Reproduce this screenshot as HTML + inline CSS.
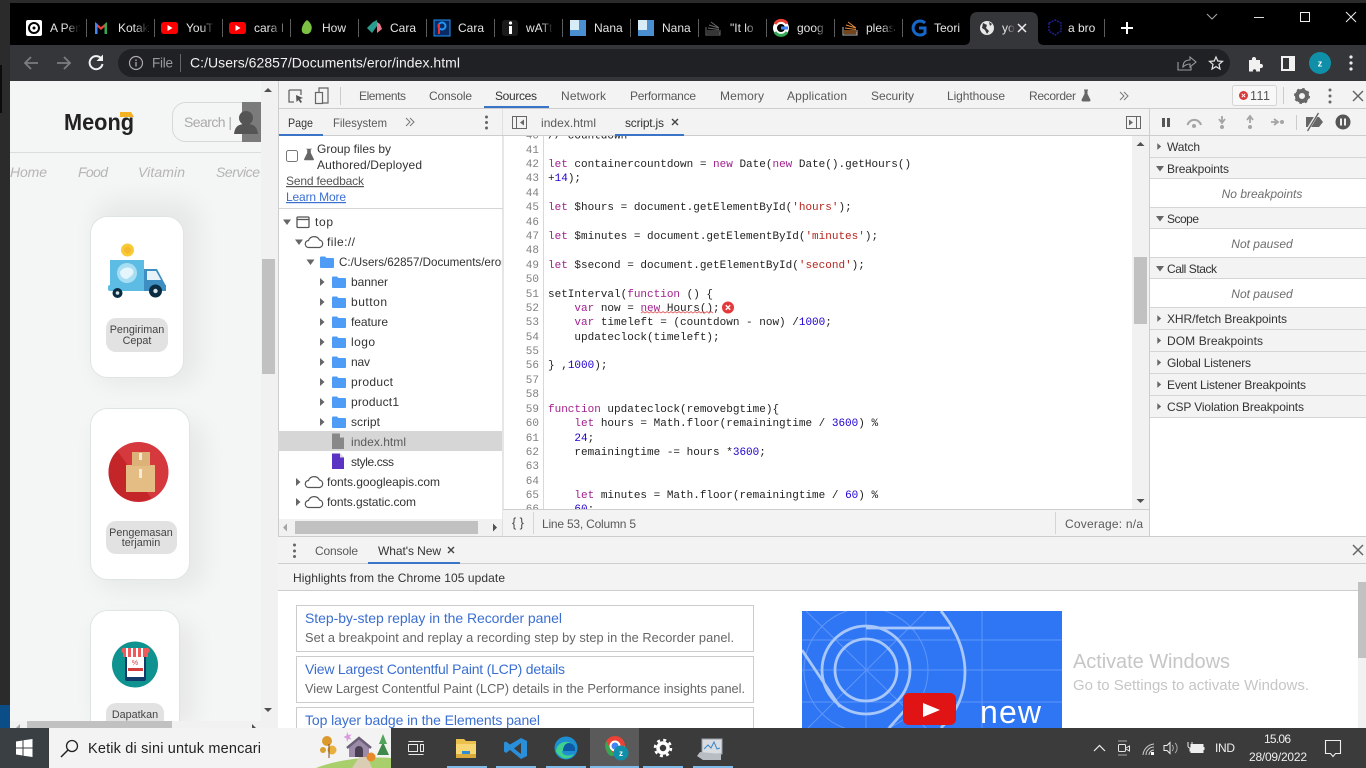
<!DOCTYPE html>
<html lang="en">
<head>
<meta charset="utf-8">
<title>script.js - DevTools</title>
<style>
html,body{margin:0;padding:0;width:1366px;height:768px;overflow:hidden;background:#000}
svg{display:block}
text{font-family:"Liberation Sans",sans-serif;font-size:12px;fill:#333;white-space:pre}
.t{fill:#e4e4e4;font-size:12px}
.d{fill:#5a5a5a}
.w{fill:#333}
.n{fill:#808080;font-family:"Liberation Mono",monospace;font-size:11px;text-anchor:end}
.c{fill:#222;font-family:"Liberation Mono",monospace;font-size:11px}
.k{fill:#a1218e}.u{fill:#1c00cf}.s{fill:#b3261e}
.i{fill:#6d6d6d;font-style:italic;text-anchor:middle}
.nav{fill:#b5b5b5;font-style:italic;font-size:14px}
.lab{fill:#444;font-size:10.8px;text-anchor:middle}
.l{fill:#3a6fd0;font-size:14px}
.g{fill:#666;font-size:12.8px}
</style>
</head>
<body>
<svg width="1366" height="768" viewBox="0 0 1366 768" xmlns="http://www.w3.org/2000/svg">
<defs>
<linearGradient id="f"><stop offset="0" stop-color="#000" stop-opacity="0"/><stop offset="1" stop-color="#000"/></linearGradient>
<linearGradient id="f2"><stop offset="0" stop-color="#35363a" stop-opacity="0"/><stop offset="1" stop-color="#35363a"/></linearGradient>
<filter id="sh" x="-40%" y="-20%" width="180%" height="140%"><feGaussianBlur stdDeviation="12"/></filter>
<clipPath id="pg"><rect x="10" y="81" width="251" height="640"/></clipPath>
<clipPath id="th"><rect x="802" y="611" width="260" height="117"/></clipPath>
<clipPath id="nv"><rect x="279" y="210" width="223" height="310"/></clipPath>
<path id="fo" d="M0 1.500a1 1 0 0 1 1-1h4l1.500 1.500H13a1 1 0 0 1 1 1V11a1 1 0 0 1-1 1H1a1 1 0 0 1-1-1z" fill="#4e9cf5"/>
<path id="ra" d="M0-4L4.500 0L0 4z" fill="#666"/>
<path id="rd" d="M-4-2.500H4L0 3z" fill="#666"/>
<path id="cl" d="M4 11.500a3.500 3.500 0 0 1-.5-7A6 6 0 0 1 14.500 4a3.800 3.800 0 0 1 0 7.500z" fill="none" stroke="#555" stroke-width="1.200"/>
</defs>

<!-- window frame -->
<rect width="1366" height="768" fill="#000"/>
<rect width="1366" height="3" fill="#2b2b2b"/>
<rect width="10" height="728" fill="#2b2b2b"/>
<rect x="0" y="65" width="2" height="48" fill="#0c0c0c"/>
<rect x="0" y="705" width="10" height="23" fill="#0b4d87"/>

<!-- tab strip -->
<path d="M964 45q6 0 6-6V20q0-8 8-8h52q8 0 8 8v19q0 6 6 6z" fill="#35363a"/>
<path d="M86.500 19V37M154.500 19V37M222.500 19V37M290.500 19V37M358.500 19V37M426.500 19V37M494.500 19V37M562.500 19V37M630.500 19V37M698.500 19V37M766.500 19V37M834.500 19V37M902.500 19V37M1104.500 19V37" stroke="#5c5c5c"/>
<!-- favicons -->
<rect x="26" y="20" width="16" height="16" rx="2" fill="#fff"/><circle cx="34" cy="28" r="5" fill="none" stroke="#000" stroke-width="2"/><circle cx="34" cy="28" r="1.500" fill="#000"/>
<path d="M95 34V22l6 5 6-5v12h-2.500v-7l-3.500 3-3.500-3v7z" fill="#ea4335"/><path d="M95 34V22l2.500 2v10z" fill="#4285f4"/><path d="M107 34V22l-2.500 2v10z" fill="#34a853"/>
<rect x="161" y="22" width="17" height="12" rx="3" fill="#f00"/><path d="M167.500 25v6l5-3z" fill="#fff"/>
<rect x="229" y="22" width="17" height="12" rx="3" fill="#f00"/><path d="M235.500 25v6l5-3z" fill="#fff"/>
<path d="M307 20c4 3 6 7 4 11-1 3-5 4-8 2-3-3 0-10 4-13z" fill="#7cc142"/>
<path d="M373 22l4-2v6l-5 7-5-5z" fill="#2a9d8f"/><path d="M377 22l3 2 2 5-5 4v-7z" fill="#e8788a"/>
<rect x="434" y="20" width="16" height="16" fill="#0a2a66" stroke="#2196f3"/><circle cx="442" cy="26" r="3.500" fill="none" stroke="#2196f3" stroke-width="2"/><rect x="438" y="24" width="2" height="10" fill="#e33"/>
<rect x="502" y="20" width="16" height="16" rx="3" fill="#1a1a1a"/><rect x="509" y="26" width="3" height="8" fill="#fff"/><circle cx="510.500" cy="23" r="1.600" fill="#fff"/>
<rect x="570" y="20" width="16" height="16" fill="#4a90d0"/><rect x="570" y="20" width="9" height="10" fill="#d8ecf8"/>
<rect x="638" y="20" width="16" height="16" fill="#4a90d0"/><rect x="638" y="20" width="9" height="10" fill="#d8ecf8"/>
<path d="M707 33h13M707 31h12M708 28l11 1.500M709 25l10 3M711 22l8 6" stroke="#6b6b6b" stroke-width="1" fill="none"/><path d="M706 27v8h14v-5" stroke="#6b6b6b" fill="none"/>
<circle cx="781" cy="28" r="6" fill="none" stroke="#fff" stroke-width="4"/><path d="M775 24a7 7 0 0 1 12-0.500" stroke="#ea4335" stroke-width="3" fill="none"/><path d="M775 32a7 7 0 0 0 12 0" stroke="#34a853" stroke-width="3" fill="none"/><path d="M781 28h7" stroke="#4285f4" stroke-width="3"/>
<path d="M844 33h13M844 31h12M845 28l11 1.500M846 25l10 3M848 22l8 6" stroke="#e88a3a" stroke-width="1" fill="none"/><path d="M843 27v8h14v-5" stroke="#bbb" fill="none"/>
<path d="M925 23a7 7 0 1 0 0 10v-5h-6" stroke="#1767c8" stroke-width="3" fill="none"/>
<circle cx="987" cy="28" r="7" fill="#e8e8e8"/><path d="M983 23l4 2-1 3 3 3-2 3-2-4-3-2zM989 22l3 2-2 2z" fill="#35363a"/>
<path d="M1049 23l6-3 6 3v8l-6 4-6-4z" fill="none" stroke="#20208c" stroke-width="1.500" stroke-dasharray="2 1"/>
<!-- titles -->
<text class="t" x="50" y="32">A Per</text><rect x="66" y="18" width="13" height="20" fill="url(#f)"/>
<text class="t" x="118" y="32">Kotak</text><rect x="135" y="18" width="13" height="20" fill="url(#f)"/>
<text class="t" x="186" y="32">YouT</text><rect x="202" y="18" width="12" height="20" fill="url(#f)"/>
<text class="t" x="254" y="32">cara l</text><rect x="270" y="18" width="12" height="20" fill="url(#f)"/>
<text class="t" x="322" y="32">How</text>
<text class="t" x="390" y="32">Cara</text>
<text class="t" x="458" y="32">Cara</text>
<text class="t" x="526" y="32">wATt</text><rect x="541" y="18" width="12" height="20" fill="url(#f)"/>
<text class="t" x="594" y="32">Nana</text>
<text class="t" x="662" y="32">Nana</text>
<text class="t" x="730" y="32">"It lo</text><rect x="746" y="18" width="12" height="20" fill="url(#f)"/>
<text class="t" x="797" y="32">goog</text><rect x="815" y="18" width="12" height="20" fill="url(#f)"/>
<text class="t" x="866" y="32">pleas</text><rect x="882" y="18" width="12" height="20" fill="url(#f)"/>
<text class="t" x="934" y="32">Teori</text>
<text class="t" x="1002" y="32">yo</text><rect x="1007" y="18" width="8" height="20" fill="url(#f2)"/>
<text class="t" x="1068" y="32">a bro</text>
<path d="M1018 24l8 8M1026 24l-8 8" stroke="#eee" stroke-width="1.500"/>
<path d="M1127 22v12M1121 28h12" stroke="#fff" stroke-width="2"/>
<!-- window controls -->
<path d="M1207 14l5 5 5-5" fill="none" stroke="#aaa"/>
<path d="M1254 17.500h10" stroke="#ddd"/>
<rect x="1300.500" y="12.500" width="9" height="9" fill="none" stroke="#eee"/>
<path d="M1346 12l10 10M1356 12l-10 10" stroke="#eee"/>

<!-- toolbar -->
<rect x="10" y="45" width="1356" height="36" fill="#35363a"/>
<rect x="118" y="49" width="1112" height="28" rx="14" fill="#202124"/>
<path d="M38 63H25M31 57l-6 6 6 6" fill="none" stroke="#7b7d80" stroke-width="1.800"/>
<path d="M57 63h13M64 57l6 6-6 6" fill="none" stroke="#7b7d80" stroke-width="1.800"/>
<path d="M101.500 59a6.500 6.500 0 1 0 1 5" fill="none" stroke="#f1f1f1" stroke-width="2"/><path d="M103 54.500v6.500h-6.500z" fill="#f1f1f1"/>
<circle cx="136" cy="63" r="6.500" fill="none" stroke="#aaa" stroke-width="1.200"/><path d="M136 62v4.500M136 59.500v1.500" stroke="#aaa" stroke-width="1.300"/>
<text x="152" y="67.500" textLength="21" style="font-size:13.500px;fill:#9a9b9d">File</text>
<path d="M180.500 54v18" stroke="#666"/>
<text x="190" y="67.500" textLength="270" style="font-size:14px;fill:#f1f1f1">C:/Users/62857/Documents/eror/index.html</text>
<path d="M1178 62v8h13v-3M1183 67c0-5 3-7 7-7v-3l6 5-6 5v-3c-3 0-5 1-7 3z" fill="none" stroke="#9a9b9d" stroke-width="1.100"/>
<path d="M1216 57l1.800 4 4.700.4-3.500 3 1 4.600-4-2.400-4 2.400 1-4.600-3.500-3 4.700-.4z" fill="none" stroke="#e4e4e4" stroke-width="1.200"/>
<path d="M1249 60h3c-1-4 5-4 4 0h4v4c4-1 4 5 0 4v3.500h-4c1-3-4-3-3 0h-4z" fill="#f1f1f1"/>
<rect x="1282" y="57" width="12" height="13" fill="none" stroke="#f1f1f1" stroke-width="2"/><rect x="1289" y="57" width="5" height="13" fill="#f1f1f1"/>
<circle cx="1320" cy="63" r="11" fill="#0f8fa8"/><text x="1320" y="66.500" style="font-size:9px;font-weight:bold;fill:#fff;text-anchor:middle">z</text>
<circle cx="1351" cy="57" r="1.600" fill="#eee"/><circle cx="1351" cy="63" r="1.600" fill="#eee"/><circle cx="1351" cy="69" r="1.600" fill="#eee"/>

<!-- page -->
<rect x="10" y="81" width="268" height="647" fill="#f4f5f5"/>
<g clip-path="url(#pg)">
<text x="64" y="130" textLength="70" lengthAdjust="spacingAndGlyphs" style="font-size:23.500px;font-weight:bold;fill:#222">Meong</text>
<path d="M120 112h11l3 5h-14z" fill="#f4b223"/>
<rect x="172.500" y="102.500" width="100" height="39" rx="13" fill="#f4f5f5" stroke="#d8d8d8"/>
<text x="184" y="127" textLength="48" style="font-size:14px;fill:#aaa">Search |</text>
<rect x="242" y="102" width="19" height="40" fill="#7b7b7b"/>
<circle cx="246" cy="118" r="7" fill="#555"/><path d="M234 134c1-9 6-10 12-10s11 1 12 10z" fill="#555"/>
<rect x="10" y="152" width="251" height="1" fill="#dcdcdc"/>
<text class="nav" x="10" y="177" textLength="37">Home</text>
<text class="nav" x="78" y="177" textLength="30">Food</text>
<text class="nav" x="138" y="177" textLength="47">Vitamin</text>
<text class="nav" x="216" y="177" textLength="44">Service</text>
<rect x="95" y="200" width="105" height="185" rx="20" fill="#000" opacity=".05" filter="url(#sh)"/>
<rect x="95" y="420" width="110" height="170" rx="20" fill="#000" opacity=".05" filter="url(#sh)"/>
<rect x="95" y="620" width="100" height="110" rx="20" fill="#000" opacity=".05" filter="url(#sh)"/>
<!-- card 1 -->
<rect x="90.500" y="216.500" width="93" height="161" rx="17" fill="#fff" stroke="#dfe6e2"/>
<circle cx="127.500" cy="250" r="6.500" fill="#f8cb36"/><circle cx="127.500" cy="250" r="3.500" fill="#f5b92c"/>
<rect x="110" y="260" width="34" height="31" fill="#5dbce4"/>
<circle cx="127" cy="273" r="10" fill="#a8def3"/><path d="M120 272c3-5 10-6 13-2 2 4-3 7-6 9-4 0-7-3-7-7z" fill="#e4f5fc"/>
<path d="M144 269h13l9 17v5h-22z" fill="#3e8ec2"/><path d="M147 271h9l5 9h-14z" fill="#e7f2f8"/>
<rect x="108" y="285" width="58" height="6" rx="2" fill="#5dbce4"/><path d="M144 285h22v6h-22z" fill="#3e8ec2"/>
<circle cx="117.500" cy="293" r="5" fill="#0a2c42"/><circle cx="117.500" cy="293" r="1.800" fill="#d8e4ea"/>
<circle cx="155.500" cy="291" r="6.500" fill="#0a2c42"/><circle cx="155.500" cy="291" r="2.200" fill="#d8e4ea"/>
<rect x="106" y="318" width="62" height="34" rx="10" fill="#e2e2e2"/>
<text class="lab" x="137" y="333">Pengiriman</text><text class="lab" x="137" y="344">Cepat</text>
<!-- card 2 -->
<rect x="90.500" y="408.500" width="99" height="171" rx="17" fill="#fff" stroke="#dfe6e2"/>
<circle cx="138.500" cy="472" r="30" fill="#d5383d"/>
<path d="M117.300 493.200a30 30 0 0 1 0-42.400l34 47.500a30 30 0 0 1-34-5.100z" fill="#c42529"/>
<rect x="126" y="465" width="29" height="27" fill="#e3bd83"/><rect x="132" y="452" width="18" height="14" fill="#dcb279"/>
<rect x="139" y="453" width="3" height="7" fill="#f3ead8"/><rect x="139" y="469" width="3" height="9" fill="#f3ead8"/>
<rect x="106" y="521" width="71" height="33" rx="10" fill="#e2e2e2"/>
<text class="lab" x="141" y="536">Pengemasan</text><text class="lab" x="141" y="546">terjamin</text>
<!-- card 3 -->
<rect x="90.500" y="610.500" width="89" height="140" rx="17" fill="#fff" stroke="#dfe6e2"/>
<circle cx="135" cy="664.500" r="23" fill="#0f9390"/>
<rect x="125" y="650" width="21" height="31" rx="2" fill="#133a68"/><rect x="127" y="657" width="17" height="20" fill="#fff"/>
<path d="M123 653a2 2 0 0 1 2-5h21a2 2 0 0 1 2 5v4h-25z" fill="#f05a5a"/>
<path d="M127 648v9M132 648v9M137 648v9M142 648v9" stroke="#fff" stroke-width="2"/>
<rect x="128" y="668" width="15" height="3" fill="#d63c3c"/><text x="135" y="665" style="font-size:7px;fill:#d63c3c;text-anchor:middle">%</text>
<rect x="106" y="703" width="58" height="30" rx="10" fill="#e2e2e2"/>
<text class="lab" x="135" y="718">Dapatkan</text>
</g>
<!-- page scrollbars -->
<rect x="261" y="81" width="17" height="647" fill="#f1f1f1"/>
<rect x="262" y="259" width="13" height="115" fill="#c1c1c1"/>
<path d="M268 88l4 4h-8zM268 712l4-4h-8z" fill="#505050"/>
<rect x="10" y="721" width="251" height="7" fill="#f1f1f1"/>
<rect x="27" y="721" width="145" height="7" fill="#c1c1c1"/>
<path d="M252 724l4 4h-4z" fill="#505050"/><path d="M20 724l-4 4h4z" fill="#a5a5a5"/>

<!-- devtools top tabs -->
<rect x="278" width="1088" y="81" height="647" fill="#fff"/>
<rect x="278" y="81" width="1088" height="27" fill="#f3f3f3"/>
<rect x="278" y="108" width="1088" height="1" fill="#cdcdcd"/>
<rect x="278" y="81" width="1" height="455" fill="#cdcdcd"/>
<path d="M289 90h12v5M289 90v12h5" fill="none" stroke="#666" stroke-width="1.300"/><path d="M296 95l7 3-3 1 2 3-1.500 1-2-3-2 2z" fill="#555"/>
<rect x="315.500" y="92.500" width="7" height="11" fill="none" stroke="#666" stroke-width="1.200"/><path d="M319 92v-4h9v15h-5" fill="none" stroke="#666" stroke-width="1.200"/>
<path d="M340.500 87v18" stroke="#ccc"/>
<text class="d" x="359" y="100" textLength="47">Elements</text>
<text class="d" x="429" y="100" textLength="43">Console</text>
<text x="495" y="100" textLength="42">Sources</text>
<text class="d" x="561" y="100" textLength="45">Network</text>
<text class="d" x="630" y="100" textLength="66">Performance</text>
<text class="d" x="720" y="100" textLength="44">Memory</text>
<text class="d" x="787" y="100" textLength="60">Application</text>
<text class="d" x="871" y="100" textLength="43">Security</text>
<text class="d" x="947" y="100" textLength="58">Lighthouse</text>
<text class="d" x="1029" y="100" textLength="47">Recorder</text>
<rect x="484" y="106" width="65" height="2" fill="#3a74c6"/>
<path d="M1084 90h4M1085 90v4l-3 6a1 1 0 0 0 1 1h6a1 1 0 0 0 1-1l-3-6v-4z" fill="#666" stroke="#666"/>
<path d="M1120 92l4 4-4 4M1124 92l4 4-4 4" fill="none" stroke="#777"/>
<rect x="1232.500" y="85.500" width="44" height="20" rx="2" fill="#f8f8f8" stroke="#d5d5d5"/>
<circle cx="1243.500" cy="95.500" r="4.500" fill="#d93a3a"/><path d="M1241.800 93.800l3.400 3.400M1245.200 93.800l-3.400 3.400" stroke="#fff"/>
<text x="1250" y="100" textLength="20" style="font-size:12.500px;fill:#555">111</text>
<path d="M1283.500 87v17" stroke="#ccc"/>
<circle cx="1302" cy="96" r="5" fill="none" stroke="#666" stroke-width="4"/><circle cx="1302" cy="96" r="7" fill="none" stroke="#666" stroke-width="2" stroke-dasharray="2.500 3"/>
<circle cx="1330" cy="90" r="1.500" fill="#666"/><circle cx="1330" cy="96" r="1.500" fill="#666"/><circle cx="1330" cy="102" r="1.500" fill="#666"/>
<path d="M1353 91l10 10M1363 91l-10 10" stroke="#666" stroke-width="1.500"/>

<!-- navigator -->
<rect x="279" y="109" width="224" height="26" fill="#f3f3f3"/>
<rect x="279" y="135" width="224" height="1" fill="#cdcdcd"/>
<text x="288" y="127" textLength="25" lengthAdjust="spacingAndGlyphs" style="fill:#333">Page</text>
<text class="d" x="333" y="127" textLength="54" lengthAdjust="spacingAndGlyphs">Filesystem</text>
<rect x="279" y="134" width="44" height="2" fill="#3a74c6"/>
<path d="M406 118l4 4-4 4M410 118l4 4-4 4" fill="none" stroke="#777"/>
<circle cx="486.500" cy="117" r="1.500" fill="#666"/><circle cx="486.500" cy="122.500" r="1.500" fill="#666"/><circle cx="486.500" cy="128" r="1.500" fill="#666"/>
<rect x="286.500" y="150.500" width="11" height="11" rx="2" fill="#fff" stroke="#777"/>
<path d="M306 149h6M307.500 149v4l-3 6a.6.6 0 0 0 .5 1h8a.6.6 0 0 0 .5-1l-3-6v-4z" fill="#666" stroke="#666" stroke-width=".6"/>
<text x="317" y="153" textLength="74">Group files by</text>
<text x="317" y="169" textLength="105">Authored/Deployed</text>
<text x="286" y="185" textLength="78" style="fill:#555;text-decoration:underline">Send feedback</text>
<text x="286" y="201" textLength="60" style="fill:#3a6fd0;text-decoration:underline">Learn More</text>
<rect x="279" y="208" width="224" height="1" fill="#d5d5d5"/>
<rect x="278" y="431" width="224" height="20" fill="#d6d6d6"/>
<!-- tree -->
<use href="#rd" x="287" y="222"/>
<rect x="297" y="217" width="12" height="10.500" rx="1" fill="none" stroke="#555" stroke-width="1.300"/><path d="M297.500 219.500h11" stroke="#555" stroke-width="1.300"/>
<text x="315" y="226" textLength="18">top</text>
<use href="#rd" x="299" y="242"/><use href="#cl" x="305" y="236"/>
<text x="327" y="246" textLength="28">file://</text>
<use href="#rd" x="310.500" y="262"/><use href="#fo" x="320" y="256"/>
<g clip-path="url(#nv)"><text x="339" y="266" textLength="166" lengthAdjust="spacingAndGlyphs">C:/Users/62857/Documents/eror</text></g>
<use href="#ra" x="320" y="282"/><use href="#fo" x="332" y="276"/><text x="351" y="286" textLength="37">banner</text>
<use href="#ra" x="320" y="302"/><use href="#fo" x="332" y="296"/><text x="351" y="306" textLength="36">button</text>
<use href="#ra" x="320" y="322"/><use href="#fo" x="332" y="316"/><text x="351" y="326" textLength="37">feature</text>
<use href="#ra" x="320" y="342"/><use href="#fo" x="332" y="336"/><text x="351" y="346" textLength="24">logo</text>
<use href="#ra" x="320" y="362"/><use href="#fo" x="332" y="356"/><text x="351" y="366" textLength="19">nav</text>
<use href="#ra" x="320" y="382"/><use href="#fo" x="332" y="376"/><text x="351" y="386" textLength="42">product</text>
<use href="#ra" x="320" y="402"/><use href="#fo" x="332" y="396"/><text x="351" y="406" textLength="48">product1</text>
<use href="#ra" x="320" y="422"/><use href="#fo" x="332" y="416"/><text x="351" y="426" textLength="29">script</text>
<path d="M332 433.500h8l4 4V449h-12z" fill="#888"/><path d="M340 433.500l4 4h-4z" fill="#ddd"/>
<text x="351" y="446" textLength="55" style="fill:#5a5a5a">index.html</text>
<path d="M332 453.500h8l4 4V469h-12z" fill="#5a33c4"/><path d="M340 453.500l4 4h-4z" fill="#ddd"/>
<text x="351" y="466" textLength="43">style.css</text>
<use href="#ra" x="296" y="482"/><use href="#cl" x="305" y="476"/>
<text x="327" y="486" textLength="113">fonts.googleapis.com</text>
<use href="#ra" x="296" y="502"/><use href="#cl" x="305" y="496"/>
<text x="327" y="506" textLength="89">fonts.gstatic.com</text>
<rect x="279" y="519" width="224" height="17" fill="#f1f1f1"/>
<rect x="295" y="521" width="183" height="13" fill="#c1c1c1"/>
<path d="M283 527.500l4-4v8z" fill="#a5a5a5"/><path d="M497 527.500l-4-4v8z" fill="#505050"/>
<rect x="502.500" y="108" width="1" height="428" fill="#cdcdcd"/>

<!-- editor -->
<g>
<text class="n" x="539" y="138.500">40</text>
<text class="c" x="548" y="138.500">// countdown</text>
<text class="n" x="539" y="153">41</text>
<text class="n" x="539" y="167">42</text>
<text class="c" x="548" y="167"><tspan class="k">let</tspan> containercountdown = <tspan class="k">new</tspan> Date(<tspan class="k">new</tspan> Date().getHours()</text>
<text class="n" x="539" y="181">43</text>
<text class="c" x="548" y="181">+<tspan class="u">14</tspan>);</text>
<text class="n" x="539" y="196">44</text>
<text class="n" x="539" y="210">45</text>
<text class="c" x="548" y="210"><tspan class="k">let</tspan> $hours = document.getElementById(<tspan class="s">'hours'</tspan>);</text>
<text class="n" x="539" y="225">46</text>
<text class="n" x="539" y="239">47</text>
<text class="c" x="548" y="239"><tspan class="k">let</tspan> $minutes = document.getElementById(<tspan class="s">'minutes'</tspan>);</text>
<text class="n" x="539" y="253">48</text>
<text class="n" x="539" y="268">49</text>
<text class="c" x="548" y="268"><tspan class="k">let</tspan> $second = document.getElementById(<tspan class="s">'second'</tspan>);</text>
<text class="n" x="539" y="282">50</text>
<text class="n" x="539" y="297">51</text>
<text class="c" x="548" y="297">setInterval(<tspan class="k">function</tspan> () {</text>
<text class="n" x="539" y="311">52</text>
<text class="c" x="548" y="311">    <tspan class="k">var</tspan> now = <tspan class="k">new</tspan> Hours();</text>
<path d="M641 313l2-1.500 2 1.500 2-1.500 2 1.500 2-1.500 2 1.500 2-1.500 2 1.500 2-1.500 2 1.500 2-1.500 2 1.500 2-1.500 2 1.500 2-1.500 2 1.500 2-1.500 2 1.500 2-1.500 2 1.500 2-1.500 2 1.500 2-1.500 2 1.500 2-1.500 2 1.500 2-1.500 2 1.500 2-1.500 2 1.500 2-1.500 2 1.500 2-1.500 2 1.500 2-1.500 2 1.500" fill="none" stroke="#e06060" stroke-width=".8"/>
<circle cx="728" cy="307.500" r="6" fill="#e5383b"/><path d="M725.800 305.300l4.400 4.400M730.200 305.300l-4.400 4.400" stroke="#fff" stroke-width="1.400"/>
<text class="n" x="539" y="325">53</text>
<text class="c" x="548" y="325">    <tspan class="k">var</tspan> timeleft = (countdown - now) /<tspan class="u">1000</tspan>;</text>
<text class="n" x="539" y="340">54</text>
<text class="c" x="548" y="340">    updateclock(timeleft);</text>
<text class="n" x="539" y="354">55</text>
<text class="n" x="539" y="368">56</text>
<text class="c" x="548" y="368">} ,<tspan class="u">1000</tspan>);</text>
<text class="n" x="539" y="383">57</text>
<text class="n" x="539" y="397">58</text>
<text class="n" x="539" y="412">59</text>
<text class="c" x="548" y="412"><tspan class="k">function</tspan> updateclock(removebgtime){</text>
<text class="n" x="539" y="426">60</text>
<text class="c" x="548" y="426">    <tspan class="k">let</tspan> hours = Math.floor(remainingtime / <tspan class="u">3600</tspan>) %</text>
<text class="n" x="539" y="441">61</text>
<text class="c" x="548" y="441">    <tspan class="u">24</tspan>;</text>
<text class="n" x="539" y="455">62</text>
<text class="c" x="548" y="455">    remainingtime -= hours *<tspan class="u">3600</tspan>;</text>
<text class="n" x="539" y="469">63</text>
<text class="n" x="539" y="484">64</text>
<text class="n" x="539" y="498">65</text>
<text class="c" x="548" y="498">    <tspan class="k">let</tspan> minutes = Math.floor(remainingtime / <tspan class="u">60</tspan>) %</text>
<text class="n" x="539" y="512">66</text>
<text class="c" x="548" y="512">    <tspan class="u">60</tspan>;</text>
</g>
<rect x="543" y="135" width="1" height="375" fill="#d8d8d8"/>
<!-- editor tab bar -->
<rect x="503" y="109" width="647" height="26" fill="#f3f3f3"/>
<rect x="503" y="135" width="647" height="1" fill="#cdcdcd"/>
<rect x="512.500" y="116.500" width="14" height="12" fill="none" stroke="#666"/><path d="M516.500 117v11" stroke="#666"/><path d="M524 119.500v6l-4-3z" fill="#666"/>
<text class="d" x="541" y="127" textLength="55">index.html</text>
<text x="625" y="127" textLength="39">script.js</text>
<path d="M672 119l6 6M678 119l-6 6" stroke="#444" stroke-width="1.400"/>
<rect x="615" y="134" width="69" height="2" fill="#3a74c6"/>
<rect x="1126.500" y="116.500" width="14" height="12" fill="none" stroke="#666"/><path d="M1136.500 117v11" stroke="#666"/><path d="M1129 119.500v6l4-3z" fill="#666"/>
<!-- editor scrollbar -->
<rect x="1132" y="136" width="17" height="373" fill="#f1f1f1"/>
<rect x="1134" y="257" width="13" height="67" fill="#c1c1c1"/>
<path d="M1140.500 142l4 4h-8zM1140.500 503l4-4h-8z" fill="#505050"/>
<!-- status bar -->
<rect x="503" y="510" width="647" height="26" fill="#f3f3f3"/>
<rect x="503" y="509" width="647" height="1" fill="#cdcdcd"/>
<text x="512" y="527" style="font-size:12.500px;fill:#444">{ }</text>
<path d="M533.500 512v22M1055.500 512v22" stroke="#d5d5d5"/>
<text class="d" x="542" y="528" textLength="94">Line 53, Column 5</text>
<text class="d" x="1065" y="528" textLength="78">Coverage: n/a</text>

<!-- debugger sidebar -->
<rect x="1149" y="108" width="1" height="428" fill="#cdcdcd"/>
<rect x="1150" y="109" width="216" height="26" fill="#f3f3f3"/>
<rect x="1150" y="135" width="216" height="1" fill="#cdcdcd"/>
<path d="M1162 118h3v9h-3zM1167 118h3v9h-3z" fill="#555"/>
<path d="M1187.500 125a7 7 0 0 1 13.500 0" fill="none" stroke="#a5a5a5" stroke-width="2"/><circle cx="1194" cy="126" r="2" fill="#a5a5a5"/>
<path d="M1222 116v6M1219 119l3 4 3-4" fill="none" stroke="#a5a5a5" stroke-width="1.800"/><circle cx="1222" cy="127" r="2" fill="#a5a5a5"/>
<path d="M1250 123v-6M1247 120l3-4 3 4" fill="none" stroke="#a5a5a5" stroke-width="1.800"/><circle cx="1250" cy="127" r="2" fill="#a5a5a5"/>
<path d="M1271 122h6M1274 119l4 3-4 3" fill="none" stroke="#a5a5a5" stroke-width="1.800"/><circle cx="1282" cy="122" r="2" fill="#a5a5a5"/>
<path d="M1296.500 115v15" stroke="#ccc"/>
<path d="M1306 117h13l4 5-4 5h-13z" fill="#666"/><path d="M1318 113l-11 18" stroke="#f3f3f3" stroke-width="3"/><path d="M1318.500 113l-11 18" stroke="#666" stroke-width="1.400"/>
<circle cx="1343" cy="122" r="7.500" fill="#555"/><path d="M1341 118.500v7M1345 118.500v7" stroke="#fff" stroke-width="1.800"/>
<!-- sections -->
<rect x="1150" y="136" width="216" height="21" fill="#f3f3f3"/><rect x="1150" y="157" width="216" height="1" fill="#d5d5d5"/>
<rect x="1150" y="158" width="216" height="20" fill="#f3f3f3"/><rect x="1150" y="178" width="216" height="1" fill="#d5d5d5"/>
<rect x="1150" y="207" width="216" height="1" fill="#d5d5d5"/>
<rect x="1150" y="208" width="216" height="20" fill="#f3f3f3"/><rect x="1150" y="228" width="216" height="1" fill="#d5d5d5"/>
<rect x="1150" y="257" width="216" height="1" fill="#d5d5d5"/>
<rect x="1150" y="258" width="216" height="20" fill="#f3f3f3"/><rect x="1150" y="278" width="216" height="1" fill="#d5d5d5"/>
<rect x="1150" y="307" width="216" height="1" fill="#d5d5d5"/>
<rect x="1150" y="308" width="216" height="21" fill="#f3f3f3"/><rect x="1150" y="329" width="216" height="1" fill="#d5d5d5"/>
<rect x="1150" y="330" width="216" height="21" fill="#f3f3f3"/><rect x="1150" y="351" width="216" height="1" fill="#d5d5d5"/>
<rect x="1150" y="352" width="216" height="21" fill="#f3f3f3"/><rect x="1150" y="373" width="216" height="1" fill="#d5d5d5"/>
<rect x="1150" y="374" width="216" height="21" fill="#f3f3f3"/><rect x="1150" y="395" width="216" height="1" fill="#d5d5d5"/>
<rect x="1150" y="396" width="216" height="21" fill="#f3f3f3"/><rect x="1150" y="417" width="216" height="1" fill="#d5d5d5"/>
<g transform="translate(1159,146.500) scale(.85)"><use href="#ra" x="-2" y="0"/></g>
<use href="#rd" x="1160" y="168.500"/><use href="#rd" x="1160" y="218.500"/><use href="#rd" x="1160" y="268.500"/>
<g transform="translate(1159,318.500) scale(.85)"><use href="#ra" x="-2" y="0"/></g>
<g transform="translate(1159,340.500) scale(.85)"><use href="#ra" x="-2" y="0"/></g>
<g transform="translate(1159,362.500) scale(.85)"><use href="#ra" x="-2" y="0"/></g>
<g transform="translate(1159,384.500) scale(.85)"><use href="#ra" x="-2" y="0"/></g>
<g transform="translate(1159,406.500) scale(.85)"><use href="#ra" x="-2" y="0"/></g>
<text x="1167" y="151" textLength="33">Watch</text>
<text x="1167" y="173" textLength="62">Breakpoints</text>
<text class="i" x="1262" y="198">No breakpoints</text>
<text x="1167" y="223" textLength="32">Scope</text>
<text class="i" x="1262" y="248">Not paused</text>
<text x="1167" y="273" textLength="50">Call Stack</text>
<text class="i" x="1262" y="298">Not paused</text>
<text x="1167" y="323" textLength="120">XHR/fetch Breakpoints</text>
<text x="1167" y="345" textLength="96">DOM Breakpoints</text>
<text x="1167" y="367" textLength="84">Global Listeners</text>
<text x="1167" y="389" textLength="139">Event Listener Breakpoints</text>
<text x="1167" y="411" textLength="137">CSP Violation Breakpoints</text>

<!-- drawer -->
<rect x="278" y="536" width="1088" height="54" fill="#f3f3f3"/>
<rect x="278" y="536" width="1088" height="1" fill="#cdcdcd"/>
<rect x="278" y="563" width="1088" height="1" fill="#cdcdcd"/>
<rect x="278" y="590" width="1088" height="1" fill="#cdcdcd"/>
<circle cx="294.500" cy="545" r="1.500" fill="#666"/><circle cx="294.500" cy="551" r="1.500" fill="#666"/><circle cx="294.500" cy="556.500" r="1.500" fill="#666"/>
<text class="d" x="315" y="555" textLength="43">Console</text>
<text x="378" y="555" textLength="63">What's New</text>
<path d="M448 547l6 6M454 547l-6 6" stroke="#444" stroke-width="1.400"/>
<rect x="368" y="562" width="92" height="2" fill="#3a74c6"/>
<path d="M1353 545l10 10M1363 545l-10 10" stroke="#666" stroke-width="1.500"/>
<text x="293" y="582" textLength="212">Highlights from the Chrome 105 update</text>
<!-- cards -->
<rect x="296.500" y="605.500" width="457" height="46" fill="#fff" stroke="#ccc"/>
<text class="l" x="305" y="623" textLength="257">Step-by-step replay in the Recorder panel</text>
<text class="g" x="305" y="642" textLength="429">Set a breakpoint and replay a recording step by step in the Recorder panel.</text>
<rect x="296.500" y="656.500" width="457" height="46" fill="#fff" stroke="#ccc"/>
<text class="l" x="305" y="674" textLength="260">View Largest Contentful Paint (LCP) details</text>
<text class="g" x="305" y="693" textLength="440">View Largest Contentful Paint (LCP) details in the Performance insights panel.</text>
<rect x="296.500" y="707.500" width="457" height="30" fill="#fff" stroke="#ccc"/>
<text class="l" x="305" y="725" textLength="235">Top layer badge in the Elements panel</text>
<!-- thumbnail -->
<rect x="802" y="611" width="260" height="117" fill="#2f76f5"/>
<g clip-path="url(#th)">
<g stroke="#5f96f7" stroke-width="1" fill="none">
<path d="M802 640h260M802 670h260M802 702h260M866 611v117M982 611v117M806 611l120 117M806 730l120-119"/>
<circle cx="866" cy="670" r="62"/>
</g>
<g stroke="#a8c7fa" stroke-width="2.800" fill="none">
<circle cx="866" cy="670" r="31"/><circle cx="866" cy="670" r="44"/>
<path d="M866 628h84M941 611c32 40 32 85 0 117M802 650l38 57M905 710l-16 18"/>
</g>
<rect x="903" y="693" width="53" height="32" rx="6" fill="#e01414"/>
<path d="M923 703v14l17-7z" fill="#fff"/>
<text x="980" y="723" textLength="61" style="font-size:32px;fill:#fff">new</text>
</g>
<!-- activate -->
<text x="1073" y="668" textLength="157" style="font-size:20px;fill:#c6c6c6">Activate Windows</text>
<text x="1073" y="690" textLength="236" style="font-size:15px;fill:#c6c6c6">Go to Settings to activate Windows.</text>
<rect x="1358" y="591" width="8" height="137" fill="#f1f1f1"/>
<rect x="1358" y="582" width="8" height="76" fill="#c1c1c1"/>

<!-- taskbar -->
<rect y="728" width="1366" height="40" fill="#3b3b3b"/>
<rect x="0" y="728" width="48" height="40" fill="#3a3f44"/>
<path d="M16 741.500l6.500-1v7H16zM23.500 740.300l9-1.300v8.500h-9zM16 748.500h6.500v7l-6.500-1zM23.500 748.500h9V757l-9-1.300z" fill="#fff"/>
<rect x="49" y="728" width="342" height="40" fill="#f3f3f3"/>
<circle cx="72" cy="746" r="5.500" fill="none" stroke="#222" stroke-width="1.300"/><path d="M68 750l-7 7" stroke="#222" stroke-width="1.500"/>
<text x="88" y="753" textLength="173" style="font-size:14.500px;fill:#222">Ketik di sini untuk mencari</text>
<!-- doodle -->
<path d="M316 768c20-8 50-12 75-10v10z" fill="#a9cf6c"/>
<path d="M352 768l8-12 7 0 5 12z" fill="#d9cdb4"/>
<path d="M349 747l10-8 10 8v10h-20z" fill="#9b8ba8"/><path d="M355 757v-7a4 4 0 0 1 8 0v7z" fill="#4a3f52"/>
<path d="M347 748l12-10 12 10" fill="none" stroke="#6c5f78" stroke-width="2.500"/>
<path d="M383 742l6 13h-12z" fill="#3f8a4a"/><path d="M383 734l4 10h-8z" fill="#52a35c"/>
<circle cx="327" cy="741" r="5" fill="#dc9a2e"/><circle cx="332" cy="750" r="4.500" fill="#e8b03e"/><circle cx="323" cy="750" r="3" fill="#d8a030"/><path d="M329 744v14" stroke="#7a4d20"/>
<circle cx="371" cy="757" r="4.500" fill="#e88a2a"/>
<path d="M347 732l1.500 3 3-.5-2 2.500 2 2.500-3-.5-1.500 3-.5-3.500-3-1.500 3-1.500z" fill="#d99ae0"/>
<!-- task icons -->
<path d="M408.500 741.500h15M408.500 754.500h15" stroke="#e8e8e8"/><rect x="408.500" y="744.500" width="9" height="7" fill="none" stroke="#e8e8e8"/><rect x="420.500" y="744.500" width="3" height="7" fill="none" stroke="#e8e8e8"/>
<path d="M456 739h8l2 2h10v17h-20z" fill="#ecc14b"/><rect x="456" y="744" width="20" height="14" fill="#f7d774"/><rect x="462" y="751" width="8" height="3" fill="#2c8fd6"/><rect x="456" y="754" width="20" height="4" fill="#d9a93a"/>
<path d="M521 738l6 3v15l-6 3-11-9-4 3-2-1.500v-9l2-1 4 3z" fill="#2a8fd8"/><path d="M521 743l-7 5.500 7 5.500z" fill="#3b3b3b"/>
<circle cx="566" cy="748" r="11.500" fill="#1d8fd1"/><path d="M556 752c0-7 6-11 12-10 5 1 8 5 7 9h-13c0 4 6 6 12 3-3 5-10 6-14 2-2-1-3-3-4-4z" fill="#3fcf8e"/><path d="M563 751h12c1-4-2-8-6-8s-6 4-6 8z" fill="#0c5aa6"/>
<rect x="590" y="728" width="49" height="40" fill="#5a5a5a"/>
<circle cx="615" cy="746" r="10" fill="#ea4335"/><path d="M606 741l6 11 5 3-6 1c-4-2-6-6-5-15z" fill="#34a853"/><path d="M615 746h10c0 5-2 9-6 10l-3-3z" fill="#fbbc05"/><circle cx="615" cy="746" r="4.500" fill="#4285f4" stroke="#fff" stroke-width="2"/>
<circle cx="621" cy="753" r="7.500" fill="#0f8fa8"/><text x="621" y="756" style="font-size:8px;font-weight:bold;fill:#fff;text-anchor:middle">z</text>
<circle cx="663" cy="748" r="5" fill="none" stroke="#fff" stroke-width="3.500"/><circle cx="663" cy="748" r="8" fill="none" stroke="#fff" stroke-width="2.500" stroke-dasharray="3 3.280"/>
<rect x="702" y="739" width="20" height="15" fill="#d9dde2" stroke="#9aa1a8"/><path d="M704 749l4-4 3 3 3-6 3 7 3-1" fill="none" stroke="#3a86c8"/><path d="M700 752l-3 4 6 4h18v-6z" fill="#b8bdc3"/>
<g fill="#7ebbe8"><rect x="447" y="766" width="40" height="2"/><rect x="496" y="766" width="40" height="2"/><rect x="546" y="766" width="40" height="2"/><rect x="590" y="766" width="49" height="2"/><rect x="643" y="766" width="40" height="2"/><rect x="693" y="766" width="40" height="2"/></g>
<!-- tray -->
<path d="M1094 751l5.500-5.500 5.500 5.500" fill="none" stroke="#eee" stroke-width="1.200"/>
<rect x="1118.500" y="744.500" width="7" height="7" rx="1" fill="none" stroke="#e6e6e6"/><path d="M1126 748l3.500-2v5l-3.500-2" fill="none" stroke="#e6e6e6"/><path d="M1118 741h9M1118 755h9" stroke="#aaa"/>
<path d="M1143 755a12 12 0 0 1 11-11M1146 755a8 8 0 0 1 8-8M1149 755a5 5 0 0 1 5-5" fill="none" stroke="#cfcfcf"/><rect x="1151" y="752" width="3" height="3" fill="#fff"/>
<path d="M1164 745.500v5h3l3 3v-11l-3 3z" fill="none" stroke="#eee"/><path d="M1172 745a4 4 0 0 1 0 6M1175 743a7 7 0 0 1 0 10" fill="none" stroke="#aaa"/>
<rect x="1191" y="744.500" width="12" height="8" fill="#eee" stroke="#eee"/><path d="M1188 742v4a2 2 0 0 0 4 0v-4M1190 748v3h2" fill="none" stroke="#eee"/><rect x="1203" y="747" width="1.500" height="3" fill="#eee"/>
<text x="1215" y="752" textLength="20" style="font-size:12px;fill:#eee">IND</text>
<text x="1264" y="743" textLength="27" style="font-size:12px;fill:#eee">15.06</text>
<text x="1249" y="761" textLength="58" style="font-size:12px;fill:#eee">28/09/2022</text>
<path d="M1325.500 740.500h15v13h-5l-2.500 3-2.500-3h-5z" fill="none" stroke="#eee" stroke-width="1.100"/>
</svg>
</body>
</html>
